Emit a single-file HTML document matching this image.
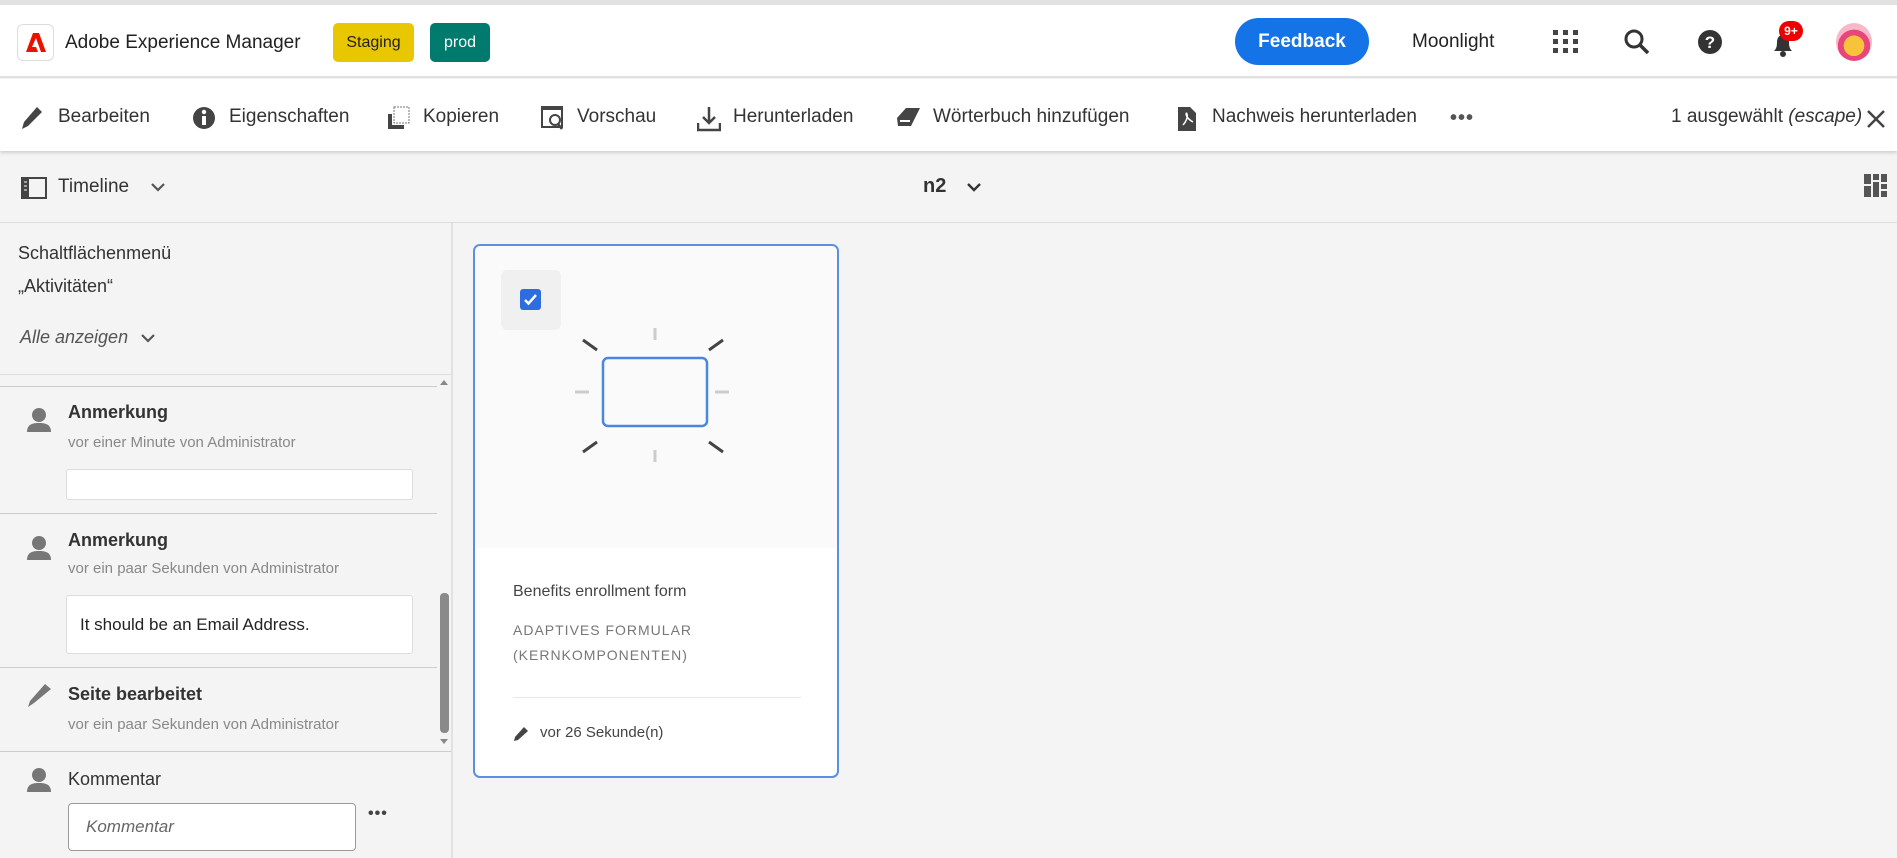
<!DOCTYPE html>
<html><head><meta charset="utf-8"><style>
*{box-sizing:border-box;margin:0;padding:0}
body{width:1897px;height:858px;overflow:hidden;background:#f4f4f4;font-family:"Liberation Sans",sans-serif;color:#2c2c2c;position:relative}
.a{position:absolute;white-space:nowrap}
svg{position:absolute}
</style></head><body>
<div class="a" style="left:0;top:0;width:1897px;height:5px;background:#e1e1e1"></div>
<div class="a" style="left:0;top:5px;width:1897px;height:73px;background:#fff;border-bottom:2px solid #e1e1e1"></div>
<div class="a" style="left:17px;top:24px;width:37px;height:37px;border:1px solid #ddd;border-radius:6px;background:#fff"></div>
<svg style="left:26px;top:33px" width="20" height="19" viewBox="0 0 20 19"><path d="M7 0h6l7 19h-5L10 5 6 14h4l2 5H0z" fill="#eb1000"/></svg>
<div class="a" style="left:65px;top:32px;font-size:19px;color:#222">Adobe Experience Manager</div>
<div class="a" style="left:333px;top:23px;width:81px;height:39px;background:#e8c600;border-radius:5px;font-size:16px;line-height:39px;text-align:center;color:#222">Staging</div>
<div class="a" style="left:430px;top:23px;width:60px;height:39px;background:#007a6c;border-radius:5px;font-size:16px;line-height:39px;text-align:center;color:#fff">prod</div>
<div class="a" style="left:1235px;top:18px;width:134px;height:47px;background:#1473e6;border-radius:24px;font-size:19px;font-weight:bold;line-height:47px;text-align:center;color:#fff">Feedback</div>
<div class="a" style="left:1412px;top:31px;font-size:19px;color:#222">Moonlight</div>
<svg style="left:1553px;top:30px" width="26" height="24" viewBox="0 0 26 24" fill="#444"><rect x="0" y="0" width="5" height="5"/><rect x="10" y="0" width="5" height="5"/><rect x="20" y="0" width="5" height="5"/><rect x="0" y="9" width="5" height="5"/><rect x="10" y="9" width="5" height="5"/><rect x="20" y="9" width="5" height="5"/><rect x="0" y="18" width="5" height="5"/><rect x="10" y="18" width="5" height="5"/><rect x="20" y="18" width="5" height="5"/></svg>
<svg style="left:1624px;top:29px" width="26" height="26" viewBox="0 0 26 26"><circle cx="10" cy="10" r="8" fill="none" stroke="#333" stroke-width="3"/><path d="M16 16l8 8" stroke="#333" stroke-width="3.5"/></svg>
<svg style="left:1697px;top:29px" width="26" height="26" viewBox="0 0 26 26"><circle cx="13" cy="13" r="12" fill="#333"/><text x="13" y="19" font-size="17" font-weight="bold" fill="#fff" text-anchor="middle" font-family="Liberation Sans">?</text></svg>
<svg style="left:1770px;top:30px" width="26" height="28" viewBox="0 0 26 28"><path d="M4 21c2-2 3-4 3-9s3-7 6-7 6 2 6 7 1 7 3 9z" fill="#333"/><circle cx="13" cy="24" r="3" fill="#333"/></svg>
<div class="a" style="left:1779px;top:21px;width:24px;height:20px;background:#e00;border-radius:10px;color:#fff;font-size:12px;font-weight:bold;line-height:20px;text-align:center">9+</div>
<div class="a" style="left:1836px;top:23px;width:36px;height:38px;border-radius:50%;background:radial-gradient(circle at 50% 60%,#f6c33a 0 35%,#e8457a 36% 55%,#f8b8c8 56%)"></div>
<div class="a" style="left:0;top:79px;width:1897px;height:72px;background:#fff;box-shadow:0 2px 3px rgba(0,0,0,.15)"></div>
<div class="a" style="top:106px;left:0;font-size:19px;color:#333;height:26px">
<svg style="left:22px;top:0" width="22" height="24" viewBox="0 0 22 24"><path d="M15 1l5 5L6 20 0 23l2-7z" fill="#444"/></svg>
<span class="a" style="left:58px">Bearbeiten</span>
<svg style="left:192px;top:0" width="24" height="24" viewBox="0 0 24 24"><circle cx="12" cy="12" r="11" fill="#444"/><rect x="10" y="10" width="4" height="9" fill="#fff"/><circle cx="12" cy="6" r="2.2" fill="#fff"/></svg>
<span class="a" style="left:229px">Eigenschaften</span>
<svg style="left:387px;top:0" width="24" height="24" viewBox="0 0 24 24"><rect x="7" y="1" width="15" height="16" fill="none" stroke="#777" stroke-width="1" stroke-dasharray="2 1"/><path d="M1 8h4v11h12v4H1z" fill="#444"/></svg>
<span class="a" style="left:423px">Kopieren</span>
<svg style="left:541px;top:0" width="24" height="26" viewBox="0 0 24 26"><rect x="1" y="1" width="20" height="20" fill="none" stroke="#444" stroke-width="2"/><rect x="1" y="1" width="20" height="3" fill="#444"/><circle cx="14" cy="14" r="5" fill="none" stroke="#444" stroke-width="2"/><path d="M17 18l4 5" stroke="#444" stroke-width="2.5"/></svg>
<span class="a" style="left:577px">Vorschau</span>
<svg style="left:697px;top:0" width="24" height="26" viewBox="0 0 24 26"><path d="M12 1v15M6 11l6 6 6-6" fill="none" stroke="#444" stroke-width="2.5"/><path d="M1 17v7h22v-7" fill="none" stroke="#444" stroke-width="2.5"/></svg>
<span class="a" style="left:733px">Herunterladen</span>
<svg style="left:896px;top:0" width="26" height="24" viewBox="0 0 26 24"><path d="M10 2h14l-9 18H2L1 12z" fill="#444"/><path d="M4 15h10" stroke="#fff" stroke-width="2"/></svg>
<span class="a" style="left:933px">Wörterbuch hinzufügen</span>
<svg style="left:1177px;top:0" width="20" height="26" viewBox="0 0 20 26"><path d="M1 1h12l6 6v18H1z" fill="#444"/><path d="M6 19c3-3 5-8 4-11s-3 3 6 8" fill="none" stroke="#fff" stroke-width="1.5"/></svg>
<span class="a" style="left:1212px">Nachweis herunterladen</span>
<span class="a" style="left:1450px;top:1px;font-size:20px;font-weight:bold;letter-spacing:1px;color:#555">•••</span>
<span class="a" style="left:1671px">1 ausgewählt <i>(escape)</i></span>
<svg style="left:1866px;top:3px" width="20" height="20" viewBox="0 0 20 20"><path d="M2 2l16 16M18 2L2 18" stroke="#444" stroke-width="2.5"/></svg>
</div>
<div class="a" style="left:0;top:222px;width:1897px;height:1px;background:#ddd"></div>
<svg style="left:21px;top:177px" width="26" height="22" viewBox="0 0 26 22"><rect x="1" y="1" width="24" height="20" fill="none" stroke="#444" stroke-width="2"/><rect x="1" y="1" width="7" height="20" fill="#444"/><path d="M3 5h3M3 9h3M3 13h3" stroke="#fff"/></svg>
<div class="a" style="left:58px;top:176px;font-size:19px;color:#333">Timeline</div>
<svg style="left:150px;top:181px" width="16" height="12" viewBox="0 0 16 12"><path d="M2 3l6 6 6-6" fill="none" stroke="#555" stroke-width="2.2"/></svg>
<div class="a" style="left:923px;top:175px;font-size:20px;font-weight:bold;color:#333">n2</div>
<svg style="left:966px;top:181px" width="16" height="12" viewBox="0 0 16 12"><path d="M2 3l6 6 6-6" fill="none" stroke="#333" stroke-width="2.4"/></svg>
<svg style="left:1864px;top:174px" width="24" height="24" viewBox="0 0 24 24" fill="#555"><rect x="0" y="0" width="7" height="10"/><rect x="9" y="0" width="6" height="6"/><rect x="17" y="0" width="6" height="8"/><rect x="0" y="12" width="7" height="11"/><rect x="9" y="8" width="6" height="15"/><rect x="17" y="10" width="6" height="5"/><rect x="17" y="17" width="6" height="6"/></svg>
<div class="a" style="left:451px;top:223px;width:2px;height:635px;background:#e1e1e1"></div>
<div class="a" style="left:18px;top:243px;font-size:18px;color:#333">Schaltflächenmenü</div>
<div class="a" style="left:18px;top:276px;font-size:18px;color:#333">„Aktivitäten“</div>
<div class="a" style="left:20px;top:327px;font-size:18px;font-style:italic;color:#555">Alle anzeigen</div>
<svg style="left:140px;top:332px" width="16" height="12" viewBox="0 0 16 12"><path d="M2 3l6 6 6-6" fill="none" stroke="#555" stroke-width="2.2"/></svg>
<div class="a" style="left:0;top:374px;width:451px;height:1px;background:#ddd"></div>
<div class="a" style="left:0;top:386px;width:437px;height:1px;background:#ccc"></div>
<div class="a" style="left:438px;top:375px;width:13px;height:373px;background:#f4f4f4"></div>
<svg style="left:439px;top:378px" width="10" height="8"><path d="M1 7l4-5 4 5z" fill="#888"/></svg>
<div class="a" style="left:440px;top:593px;width:9px;height:140px;background:#8a8a8a;border-radius:4px"></div>
<svg style="left:439px;top:738px" width="10" height="8"><path d="M1 1l4 5 4-5z" fill="#888"/></svg>
<svg style="left:26px;top:378px" width="26" height="224" viewBox="0 0 26 224" fill="#777"><g><circle cx="13" cy="37" r="7"/><path d="M1 54c0-8 6-9 12-9s12 1 12 9z"/></g><g transform="translate(0,128)"><circle cx="13" cy="37" r="7"/><path d="M1 54c0-8 6-9 12-9s12 1 12 9z"/></g></svg>
<div class="a" style="left:68px;top:402px;font-size:18px;font-weight:bold;color:#333">Anmerkung</div>
<div class="a" style="left:68px;top:434px;font-size:15px;color:#888">vor einer Minute von Administrator</div>
<div class="a" style="left:66px;top:469px;width:347px;height:31px;background:#fff;border:1px solid #ddd;border-radius:3px"></div>
<div class="a" style="left:0;top:513px;width:437px;height:1px;background:#ccc"></div>
<div class="a" style="left:68px;top:530px;font-size:18px;font-weight:bold;color:#333">Anmerkung</div>
<div class="a" style="left:68px;top:560px;font-size:15px;color:#888">vor ein paar Sekunden von Administrator</div>
<div class="a" style="left:66px;top:595px;width:347px;height:59px;background:#fff;border:1px solid #ddd;border-radius:3px;font-size:17px;line-height:57px;padding-left:13px;color:#222">It should be an Email Address.</div>
<div class="a" style="left:0;top:667px;width:437px;height:1px;background:#ccc"></div>
<svg style="left:27px;top:683px" width="25" height="25" viewBox="0 0 25 25"><path d="M18 1l6 5L7 20 1 24l2-6z" fill="#777"/></svg>
<div class="a" style="left:68px;top:684px;font-size:18px;font-weight:bold;color:#333">Seite bearbeitet</div>
<div class="a" style="left:68px;top:716px;font-size:15px;color:#888">vor ein paar Sekunden von Administrator</div>
<div class="a" style="left:0;top:751px;width:451px;height:1px;background:#ccc"></div>
<svg style="left:26px;top:760px" width="26" height="40" viewBox="0 0 26 40" fill="#777"><circle cx="13" cy="15" r="7"/><path d="M1 32c0-8 6-9 12-9s12 1 12 9z"/></svg>
<div class="a" style="left:68px;top:769px;font-size:18px;color:#333">Kommentar</div>
<div class="a" style="left:68px;top:803px;width:288px;height:48px;background:#fff;border:1px solid #999;border-radius:4px;font-size:17px;font-style:italic;line-height:46px;padding-left:17px;color:#666">Kommentar</div>
<div class="a" style="left:368px;top:805px;font-size:16px;font-weight:bold;color:#444;letter-spacing:1px">•••</div>
<div class="a" style="left:473px;top:244px;width:366px;height:534px;background:#fff;border:2px solid #5b8fe0;border-radius:7px;overflow:hidden">
<div style="position:absolute;left:0;top:0;width:100%;height:302px;background:#fafafa"></div>
<div style="position:absolute;left:26px;top:24px;width:60px;height:60px;background:#f0f0f0;border-radius:6px"></div>
<div style="position:absolute;left:45px;top:43px;width:21px;height:21px;background:#2e6de0;border-radius:3px"></div>
<svg style="left:47px;top:45px" width="17" height="17" viewBox="0 0 17 17"><path d="M3 9l3.5 3.5L14 4" fill="none" stroke="#fff" stroke-width="2.5"/></svg>
<svg style="left:100px;top:80px" width="170" height="140" viewBox="0 0 170 140"><rect x="28" y="32" width="104" height="68" rx="5" fill="none" stroke="#4a86e0" stroke-width="2.5"/><g stroke="#444" stroke-width="3"><path d="M8 14l14 10M148 14l-14 10M8 126l14-10M148 126l-14-10"/></g><g stroke="#ccc" stroke-width="3"><path d="M80 2v12M80 124v12M0 66h14M140 66h14"/></g></svg>
<div style="position:absolute;left:38px;top:337px;font-size:16px;color:#444">Benefits enrollment form</div>
<div style="position:absolute;left:38px;top:372px;font-size:14px;color:#777;letter-spacing:1px;line-height:25px">ADAPTIVES FORMULAR<br>(KERNKOMPONENTEN)</div>
<div style="position:absolute;left:38px;top:451px;width:288px;height:1px;background:#e8e8e8"></div>
<svg style="left:38px;top:480px" width="16" height="16" viewBox="0 0 16 16"><path d="M11 1l4 4L5 14 1 15l1-4z" fill="#444"/></svg>
<div style="position:absolute;left:65px;top:478px;font-size:15px;color:#444">vor 26 Sekunde(n)</div>
</div>
</body></html>
